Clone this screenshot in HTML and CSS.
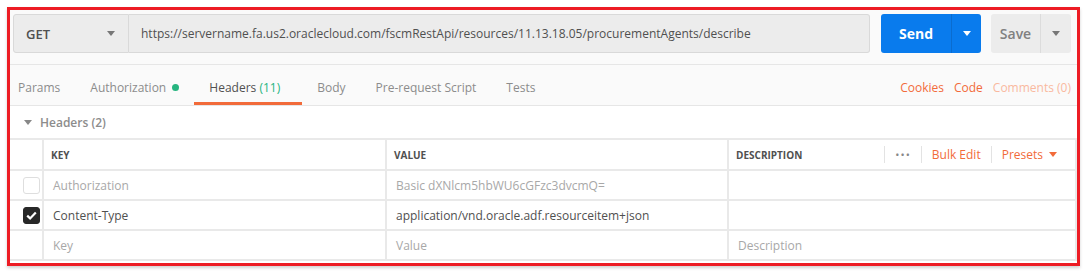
FILE: index.html
```html
<!DOCTYPE html>
<html lang="en">
<head>
  <meta charset="UTF-8" />
  <title>Request Builder</title>
  <link rel="stylesheet" href="styles.css">
</head>
<body>
<div class="frame">
  <div class="request-bar">
    <div class="method">
      <span>GET</span>
      <span class="caret"></span>
    </div>
    <div class="url">https://servername.fa.us2.oraclecloud.com/fscmRestApi/resources/11.13.18.05/procurementAgents/describe</div>
    <div class="send-btn">
      <span class="send-label">Send</span>
      <span class="send-drop"><span class="caret white"></span></span>
    </div>
    <div class="save-btn">
      <span class="save-label">Save</span>
      <span class="save-drop"><span class="caret"></span></span>
    </div>
  </div>

  <nav class="tabs">
    <div class="tab-list">
      <span class="tab first">Params</span>
      <span class="tab">Authorization <i class="dot"></i></span>
      <span class="tab active">Headers <em>(11)</em></span>
      <span class="tab">Body</span>
      <span class="tab">Pre-request Script</span>
      <span class="tab">Tests</span>
    </div>
    <div class="tab-links">
      <span class="link">Cookies</span>
      <span class="link">Code</span>
      <span class="link faded">Comments (0)</span>
    </div>
  </nav>

  <div class="section-title">
    <span class="caret"></span>
    <span>Headers (2)</span>
  </div>

  <div class="kv-table">
    <div class="cell head"></div>
    <div class="cell head">KEY</div>
    <div class="cell head">VALUE</div>
    <div class="cell head desc-head">
      <span>DESCRIPTION</span>
      <div class="head-actions">
        <span class="more">&bull;&bull;&bull;</span>
        <span class="action">Bulk Edit</span>
        <span class="action">Presets <span class="caret orange"></span></span>
      </div>
    </div>

    <div class="cell check"><span class="box"></span></div>
    <div class="cell muted">Authorization</div>
    <div class="cell muted">Basic dXNlcm5hbWU6cGFzc3dvcmQ=</div>
    <div class="cell"></div>

    <div class="cell check"><span class="box on"><svg width="11" height="9" viewBox="0 0 11 9"><path d="M1.2 4.6 L4.1 7.4 L9.8 1.4" fill="none" stroke="#fff" stroke-width="2.2"/></svg></span></div>
    <div class="cell">Content-Type</div>
    <div class="cell">application/vnd.oracle.adf.resourceitem+json</div>
    <div class="cell"></div>

    <div class="cell check"></div>
    <div class="cell placeholder">Key</div>
    <div class="cell placeholder">Value</div>
    <div class="cell placeholder">Description</div>
  </div>
</div>
</body>
</html>
```

FILE: styles.css
```css
html, body {
  margin: 0;
  padding: 0;
  background: #ffffff;
  font-family: "Open Sans", "Noto Sans", sans-serif;
  font-size: 12px;
  color: #505050;
}
.frame {
  margin: 7px;
  width: 1067px;
  height: 253px;
  border: 3px solid #ed1c24;
  background: #ffffff;
  box-shadow: 0 2px 3px rgba(0, 0, 0, 0.18);
}

/* request bar */
.request-bar {
  display: flex;
  align-items: stretch;
  height: 39px;
  padding: 4px 6px 11px 3px;
  background: #fafafa;
  border-bottom: 1px solid #e6e6e6;
}
.method {
  width: 116px;
  display: flex;
  align-items: center;
  justify-content: space-between;
  padding: 0 13px 0 12px;
  box-sizing: border-box;
  background: #ececec;
  border: 1px solid #d9d9d9;
  border-radius: 3px 0 0 3px;
  font-size: 13px;
  font-weight: 600;
  color: #505050;
}
.url {
  width: 741px;
  display: flex;
  align-items: center;
  padding-left: 12px;
  box-sizing: border-box;
  background: #ececec;
  border: 1px solid #d9d9d9;
  border-left: none;
  border-radius: 0 3px 3px 0;
  color: #505050;
  white-space: nowrap;
}
.caret {
  display: inline-block;
  width: 0;
  height: 0;
  border-left: 4px solid transparent;
  border-right: 4px solid transparent;
  border-top: 5px solid #777;
}
.caret.white { border-top-color: #ffffff; }
.caret.orange { border-top-color: #f26b3a; margin-left: 6px; vertical-align: 2px; }
.send-btn {
  margin-left: 11px;
  width: 100px;
  display: flex;
  background: #097bed;
  border-radius: 3px;
  color: #ffffff;
  font-size: 14px;
  font-weight: 700;
}
.send-label {
  flex: 1;
  display: flex;
  align-items: center;
  justify-content: center;
}
.send-drop {
  width: 29px;
  display: flex;
  align-items: center;
  justify-content: center;
  border-left: 1px solid #0a6ccf;
}
.save-btn {
  margin-left: 10px;
  width: 80px;
  display: flex;
  background: #ececec;
  border-radius: 3px;
  color: #808080;
  font-size: 14px;
  font-weight: 600;
}
.save-label {
  flex: 1;
  display: flex;
  align-items: center;
  justify-content: center;
}
.save-drop {
  width: 30px;
  display: flex;
  align-items: center;
  justify-content: center;
  border-left: 1px solid #dcdcdc;
}

/* tabs */
.tabs {
  display: flex;
  justify-content: space-between;
  height: 40px;
  background: #fafafa;
  border-bottom: 1px solid #e6e6e6;
  padding-right: 6px;
}
.tab-list {
  display: flex;
  padding-left: 8px;
}
.tab {
  padding: 14px 15px 0;
  line-height: 18px;
  color: #8c8c8c;
  box-sizing: border-box;
  height: 40px;
}
.tab.first { padding-left: 0; }
.tab.active {
  color: #505050;
  border-bottom: 3px solid #f26b3a;
  padding: 14px 22px 0 15px;
}
.tab em {
  font-style: normal;
  color: #26b47f;
}
.dot {
  display: inline-block;
  width: 7px;
  height: 7px;
  border-radius: 50%;
  background: #26b47f;
  margin-left: 3px;
  vertical-align: 1px;
}
.tab-links {
  display: flex;
  gap: 10px;
  padding-top: 14px;
  line-height: 18px;
}
.link { color: #f26b3a; }
.link.faded { color: #f9b99f; }

/* headers section */
.section-title {
  height: 32px;
  display: flex;
  align-items: center;
  gap: 8px;
  padding-left: 14px;
  color: #8c8c8c;
  font-weight: 600;
}
.section-title .caret { border-top-color: #888; }

.kv-table {
  display: grid;
  grid-template-columns: 32px 341px 340px 1fr;
  grid-template-rows: 29px 28px 28px 28px;
  gap: 2px;
  padding: 2px 2px 2px 0;
  background: #e9e9e9;
}
.cell {
  background: #ffffff;
  display: flex;
  align-items: center;
  padding-left: 9px;
  color: #505050;
  white-space: nowrap;
}
.cell.head {
  padding-left: 7px;
  font-size: 10px;
  font-weight: 700;
  color: #505050;
}
.cell.check {
  padding-left: 13px;
}
.cell.muted, .cell.placeholder { color: #a8a8a8; }
.desc-head {
  justify-content: space-between;
}
.head-actions {
  display: flex;
  align-items: center;
  height: 17px;
  font-size: 12px;
  font-weight: 400;
  padding-right: 18px;
}
.head-actions > span {
  height: 17px;
  display: flex;
  align-items: center;
  border-left: 1px solid #e3e3e3;
  padding: 0 10px;
}
.more {
  color: #888;
  font-size: 11px;
  letter-spacing: 1px;
}
.action { color: #f26b3a; }
.head-actions > span:last-child { padding-right: 0; }
.box {
  width: 15px;
  height: 15px;
  border: 1px solid #dedede;
  border-radius: 3px;
  background: #ffffff;
  display: flex;
  align-items: center;
  justify-content: center;
}
.box.on {
  background: #282828;
  border-color: #282828;
}
```
